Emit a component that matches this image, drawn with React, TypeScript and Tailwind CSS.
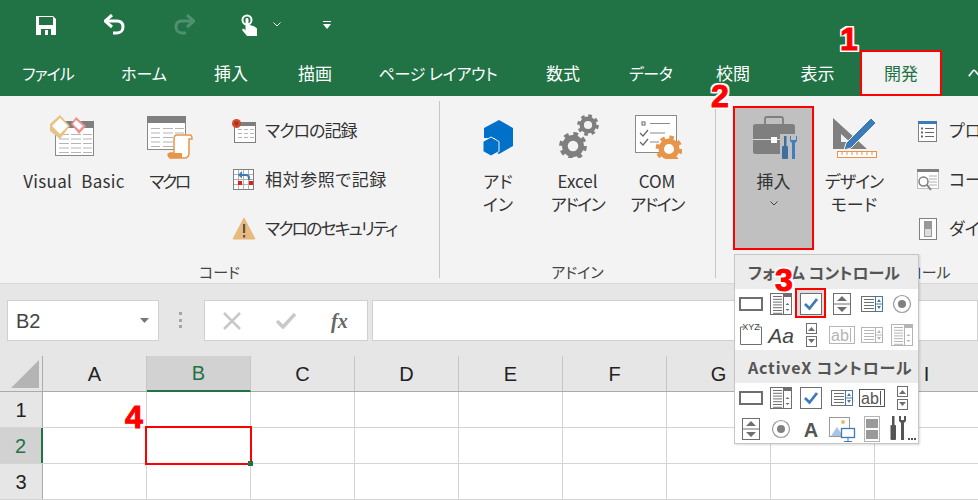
import React from "react";

const jp = "[font-family:'Noto_Sans_CJK_JP','Liberation_Sans',sans-serif] [font-feature-settings:'palt']";

const Gear = ({ cx, cy, r, color, hole = "#f3f3f3" }: { cx: number; cy: number; r: number; color: string; hole?: string }) => {
  const teethR = r * 0.88;
  const dash = (2 * Math.PI * teethR) / 16;
  return (
    <g>
      <circle cx={cx} cy={cy} r={teethR} fill="none" stroke={color} strokeWidth={r * 0.3} strokeDasharray={`${dash} ${dash}`} />
      <circle cx={cx} cy={cy} r={r * 0.6} fill={hole} stroke={color} strokeWidth={r * 0.42} />
    </g>
  );
};

const Lines = ({ x, y, w, n, gap, color = "#b5b5b5" }: { x: number; y: number; w: number; n: number; gap: number; color?: string }) => (
  <g stroke={color} strokeWidth="1">
    {Array.from({ length: n }).map((_, i) => (
      <line key={i} x1={x} x2={x + w} y1={y + i * gap + 0.5} y2={y + i * gap + 0.5} />
    ))}
  </g>
);

// quick access toolbar
const SaveIcon = () => (
  <svg width="20" height="20" viewBox="0 0 20 20">
    <path d="M0 1h17l3 3v16H0z" fill="#fff" />
    <rect x="3" y="2" width="14" height="8" fill="#217346" />
    <rect x="5" y="14" width="10" height="6" fill="#217346" />
    <rect x="9" y="15" width="3" height="5" fill="#fff" />
  </svg>
);
const UndoIcon = ({ dim }: { dim?: boolean }) => (
  <svg width="22" height="21" viewBox="0 0 22 21" className={dim ? "-scale-x-100" : ""}>
    <path d="M3 7h10c4 0 6 2.5 6 6s-2.500 6-6 6H9" fill="none" stroke={dim ? "#4f9070" : "#fff"} strokeWidth="3" />
    <path d="M8 1L1 7l7 6" fill="none" stroke={dim ? "#4f9070" : "#fff"} strokeWidth="3" />
  </svg>
);
const TouchIcon = () => (
  <svg width="17" height="22" viewBox="0 0 17 22">
    <circle cx="6" cy="6" r="4.500" fill="none" stroke="#fff" strokeWidth="2" />
    <path d="M4.500 5.500c0-2 3-2 3 0v5l6 2 2.500 2V22H6l-5-6 1-1.500 2.500 1.500z" fill="#fff" />
  </svg>
);

// ribbon icons
const VbIcon = () => (
  <svg width="48" height="48" viewBox="0 0 48 48">
    <rect x="5.500" y="11.500" width="38" height="34" fill="#fff" stroke="#8a8a8a" />
    <rect x="5" y="11" width="39" height="7" fill="#7f7f7f" />
    <Lines x={9} y={24} w={10} n={5} gap={4.500} />
    <Lines x={21} y={24} w={10} n={5} gap={4.500} />
    <Lines x={33} y={24} w={9} n={5} gap={4.500} />
    <path d="M10 5l10 11-10 13-10-8v-7z" fill="#e8c185" />
    <path d="M10 8l8 8-8 8-8-8z" fill="#fff" />
    <path d="M26 7l10 9-7 8-8-10z" fill="#ef8f8f" />
    <path d="M26 10l7 6-4 4-6-6z" fill="#fff" />
  </svg>
);
const MacroIcon = () => (
  <svg width="48" height="50" viewBox="0 0 48 50">
    <rect x="2.500" y="7.500" width="38" height="33" fill="#fff" stroke="#8a8a8a" />
    <rect x="2" y="7" width="39" height="7" fill="#7f7f7f" />
    <Lines x={6} y={19} w={9} n={5} gap={4.500} />
    <Lines x={18} y={19} w={10} n={5} gap={4.500} />
    <Lines x={30} y={19} w={9} n={3} gap={4.500} />
    <g transform="translate(0 3)">
      <path d="M29 27c0-3 1-4 3-4h13c2 0 2 2 2 4h-3v14c0 3-2 5-5 5H25v-5h4z" fill="#fff" stroke="#e8954a" strokeWidth="1.500" />
      <path d="M23 41h14v5H25c-3 0-3-5-2-5z" fill="#e8954a" />
    </g>
  </svg>
);
const RecordIcon = () => (
  <svg width="24" height="24" viewBox="0 0 24 24">
    <rect x="2.500" y="3.500" width="21" height="20" fill="#fff" stroke="#808080" />
    <rect x="2" y="3" width="22" height="4" fill="#7f7f7f" />
    <Lines x={6} y={10} w={4} n={3} gap={4} />
    <Lines x={12} y={10} w={4} n={3} gap={4} />
    <Lines x={18} y={10} w={4} n={3} gap={4} />
    <circle cx="4.500" cy="4.500" r="4.500" fill="#d64a2c" />
    <circle cx="4.500" cy="4.500" r="2.200" fill="#a83420" />
  </svg>
);
const RelativeIcon = () => (
  <svg width="24" height="24" viewBox="0 0 24 24">
    <rect x="1.500" y="1.500" width="20" height="20" fill="#fff" stroke="#808080" />
    <path d="M6.500 2v19M11.500 2v19M16.500 2v19M2 6.500h19M2 11.500h19M2 16.500h19" stroke="#b0b0b0" />
    <path d="M8 7h6c2 0 3 1 3 3v2" fill="none" stroke="#3d7ab8" strokeWidth="2" />
    <path d="M10 3L6 7l4 3.500z" fill="#3d7ab8" />
    <rect x="6" y="13" width="4" height="4" fill="#e02020" />
    <rect x="17" y="13" width="4" height="4" fill="#e02020" />
  </svg>
);
const WarnIcon = () => (
  <svg width="24" height="24" viewBox="0 0 24 24">
    <path d="M12 1l11 21H1z" fill="#e8b97c" stroke="#e8b97c" />
    <rect x="11" y="7" width="2.200" height="9" fill="#555" />
    <rect x="11" y="18" width="2.200" height="2.500" fill="#555" />
  </svg>
);
const AddinIcon = () => (
  <svg width="34" height="44" viewBox="0 0 34 44">
    <g transform="translate(0 6)">
      <path d="M18 2l14 8v18l-14 8-4-2V20H3v-10z" fill="#0070c9" />
      <path d="M10 19l8 4.500v10L10 38l-8-4.500v-10z" fill="#0070c9" stroke="#f3f3f3" strokeWidth="1" />
    </g>
  </svg>
);
const ExcelAddinIcon = () => (
  <svg width="44" height="48" viewBox="0 0 44 48">
    <Gear cx={17} cy={36} r={13.500} color="#7f7f7f" />
    <Gear cx={32} cy={15} r={10.500} color="#7f7f7f" />
  </svg>
);
const ComIcon = () => (
  <svg width="50" height="50" viewBox="0 0 50 50">
    <rect x="3.500" y="6.500" width="41" height="37" fill="#fff" stroke="#8a8a8a" />
    <rect x="10" y="13" width="3" height="3" fill="none" stroke="#666" />
    <path d="M18 14.500h20M18 24h15M18 33h9" stroke="#8a8a8a" />
    <path d="M8 24l3 3 5-6M8 33l3 3 5-6" fill="none" stroke="#666" strokeWidth="1.200" />
    <Gear cx={37} cy={40} r={13} color="#e8954a" hole="#fff" />
  </svg>
);
const InsertIcon = () => (
  <svg width="50" height="52" viewBox="0 0 50 52">
    <path d="M16 16V11c0-1.200 1-2 2-2h14c1 0 2 .8 2 2v5" fill="none" stroke="#7f7f7f" strokeWidth="1.800" />
    <rect x="4" y="16" width="42" height="30" rx="2.500" fill="#7f7f7f" />
    <rect x="4" y="31" width="42" height="1" fill="#dcdcdc" />
    <rect x="22" y="29" width="6" height="6" fill="#fff" />
    <rect x="31" y="26" width="19" height="26" fill="#c0c0c0" />
    <rect x="35" y="28" width="2.500" height="11" fill="#3f6f9f" />
    <rect x="33" y="38" width="6" height="13" rx="1" fill="#3f6f9f" />
    <path d="M41 28v5l2 2v16h3V35l2-2v-5h-1v4h-5v-4z" fill="#3f7fbf" />
  </svg>
);
const DesignIcon = () => (
  <svg width="48" height="48" viewBox="0 0 48 48">
    <path d="M3 8l34 31H3z M11 24v8h9z" fill="#7f7f7f" fillRule="evenodd" />
    <path d="M41 8L16 33l-2 7 7-2 25-25z" fill="#3d7ab8" stroke="#f3f3f3" />
    <rect x="7.500" y="41.500" width="39" height="6" fill="#fff" stroke="#e8954a" />
    <path d="M12 42v3M17 42v3M22 42v3M27 42v3M32 42v3M37 42v3M42 42v3" stroke="#e8954a" />
  </svg>
);
const PropIcon = () => (
  <svg width="24" height="24" viewBox="0 0 24 24">
    <rect x="2.500" y="2.500" width="18" height="20" fill="#fff" stroke="#808080" />
    <rect x="2" y="2" width="19" height="3" fill="#3d7ab8" />
    <path d="M9 9.500h9M9 13.500h9M9 17.500h9" stroke="#666" />
    <rect x="5" y="8.500" width="2" height="2" fill="#666" />
    <rect x="5" y="12.500" width="2" height="2" fill="#666" />
    <rect x="5" y="16.500" width="2" height="2" fill="#666" />
  </svg>
);
const CodeIcon = () => (
  <svg width="24" height="24" viewBox="0 0 24 24">
    <rect x="1.500" y="2.500" width="21" height="18" fill="#fff" stroke="#c0c0c0" />
    <rect x="1" y="1" width="22" height="3" fill="#7f7f7f" />
    <path d="M13 8h8M13 11h8M13 14h8M13 17h8" stroke="#b0b0b0" />
    <circle cx="7.500" cy="13.500" r="4.500" fill="#fff" stroke="#7f7f7f" strokeWidth="1.500" />
    <path d="M11 17l4 5" stroke="#7f7f7f" strokeWidth="2" />
  </svg>
);
const DialogIcon = () => (
  <svg width="24" height="24" viewBox="0 0 24 24">
    <rect x="3.500" y="1.500" width="17" height="21" fill="#fff" stroke="#808080" />
    <rect x="8.500" y="4.500" width="7" height="15" fill="#ddd" stroke="#999" />
    <rect x="9" y="5" width="6" height="7" fill="#999" />
  </svg>
);

// form control icons, all 28x28
const G = "#6e6e6e";
const ButtonCtl = () => <rect x="3" y="8" width="22" height="12" fill="#fff" stroke={G} strokeWidth="2" />;
const ComboCtl = ({ c = G }: { c?: string }) => (
  <g>
    <rect x="3.500" y="3.500" width="21" height="21" fill="#fff" stroke={c} />
    <rect x="16" y="4" width="8" height="3" fill={c} />
    <path d="M18.500 15l2-2 2 2zM18.500 19l2 2 2-2z" fill={c} />
    <path d="M16.500 7v17" stroke={c} />
    <Lines x={6} y={6} w={9} n={7} gap={2.800} color={c} />
  </g>
);
const CheckCtl = () => (
  <g>
    <rect x="3.500" y="3.500" width="21" height="21" fill="#fff" stroke={G} />
    <path d="M8 14l4.500 4.500L20 9" fill="none" stroke="#3d7ab8" strokeWidth="2.800" />
  </g>
);
const SpinCtl = () => (
  <g>
    <rect x="5.500" y="3.500" width="17" height="21" fill="#fff" stroke={G} />
    <path d="M6 14h16" stroke={G} />
    <path d="M9 11l5-5 5 5zM9 17l5 5 5-5z" fill={G} />
  </g>
);
const NarrowSpin = () => (
  <g>
    <rect x="9.500" y="2.500" width="10" height="10" fill="#fff" stroke={G} />
    <rect x="9.500" y="15.500" width="10" height="10" fill="#fff" stroke={G} />
    <path d="M11 10l3.500-4 3.500 4zM11 18l3.500 4 3.500-4z" fill={G} />
  </g>
);
const ListCtl = ({ c = G, b = "#3d7ab8" }: { c?: string; b?: string }) => (
  <g>
    <rect x="3.500" y="6.500" width="15" height="15" fill="#fff" stroke={c} />
    <Lines x={6} y={9} w={10} n={4} gap={3} color={c} />
    <rect x="17.500" y="6.500" width="7" height="15" fill="#fff" stroke={b} />
    <path d="M17.500 14h7" stroke={b} />
    <path d="M19 12l2-3 2 3zM19 16l2 3 2-3z" fill={c} />
  </g>
);
const RadioCtl = () => (
  <g>
    <circle cx="14" cy="14" r="8.500" fill="#fff" stroke="#999" strokeWidth="1.200" />
    <circle cx="14" cy="14" r="4" fill="#808080" />
  </g>
);
const LabelCtl = () => (
  <g>
    <path d="M7 6H3.500v17.500h21V6H21" fill="none" stroke={G} />
    <text x="14" y="9" fontSize="9" textAnchor="middle" fill="#444" fontFamily="'Liberation Sans'">XYZ</text>
  </g>
);
const AaCtl = () => (
  <text x="14" y="22" fontSize="21" textAnchor="middle" fontStyle="italic" fill="#444" fontFamily="'Liberation Sans'">Aa</text>
);
const TextCtl = ({ c }: { c: string }) => (
  <g>
    <rect x="1.500" y="5.500" width="25" height="17" fill="#fff" stroke={c} />
    <text x="12" y="20" fontSize="16" textAnchor="middle" fill={c} fontFamily="'Liberation Sans'">ab</text>
    <path d="M22.500 7v14" stroke={c} />
  </g>
);
const BoldA = () => (
  <text x="14" y="22" fontSize="20" textAnchor="middle" fontWeight="700" fill="#555" fontFamily="'Liberation Sans'">A</text>
);
const PictureCtl = () => (
  <g>
    <rect x="1.500" y="2.500" width="20" height="19" fill="#fff" stroke="#999" />
    <circle cx="15" cy="7" r="2" fill="#e8b97c" />
    <path d="M3 21l6-9 6 9z" fill="#a9c6de" />
    <rect x="13.500" y="13.500" width="13" height="9" fill="#fff" stroke="#3d7ab8" strokeWidth="1.300" />
    <path d="M20 23v3M16 26.500h8" stroke="#3d7ab8" />
  </g>
);
const ToggleCtl = () => (
  <g>
    <rect x="6.500" y="1.500" width="15" height="25" fill="#fff" stroke="#b5b5b5" />
    <rect x="8" y="4" width="12" height="9" fill="#999" />
    <rect x="8" y="15" width="12" height="9" fill="#999" />
  </g>
);
const ToolsCtl = () => (
  <g fill="#555">
    <rect x="4" y="1" width="2.500" height="10" />
    <rect x="2.500" y="10" width="5.500" height="15" rx="1" />
    <path d="M11 1v5l2 2v17h3V8l2-2V1l-2 0v4h-3V1z" />
    <rect x="20" y="23" width="2" height="2" />
    <rect x="23" y="23" width="2" height="2" />
    <rect x="26" y="23" width="2" height="2" />
  </g>
);

const Cell = ({ children, selected }: { children: React.ReactNode; selected?: boolean }) => (
  <div className="relative flex items-center justify-center">
    {selected && <div className="absolute left-[-1px] top-[-1px] w-[31px] h-[30px] bg-[#dedede] border-2 border-[#f00]" />}
    <svg width="28" height="28" viewBox="0 0 28 28" className="relative">
      {children}
    </svg>
  </div>
);

const LargeButton = ({ icon, lines, w, extra }: { icon: React.ReactNode; lines: React.ReactNode[]; w: string; extra?: string }) => (
  <div className={`flex flex-col items-center pt-[13px] text-[17px] leading-[23px] text-[#333] shrink-0 ${w} ${extra || ""}`}>
    <div className="h-[50px] flex items-center justify-center">{icon}</div>
    <div className="mt-[10px] flex flex-col items-center">
      {lines.map((l, i) => (
        <span key={i} className="whitespace-nowrap">{l}</span>
      ))}
    </div>
  </div>
);

const SmallItem = ({ icon, label, cls }: { icon: React.ReactNode; label: string; cls?: string }) => (
  <div className="h-[49px] flex items-center gap-[9px] text-[17px] text-[#333] whitespace-nowrap">
    {icon}
    <span className={`-mt-[2px] ${cls || ""}`}>{label}</span>
  </div>
);

const Narrow = ({ children, cls = "tracking-[-1.500px]" }: { children: React.ReactNode; cls?: string }) => <span className={cls}>{children}</span>;

const Divider = () => <div className="w-px shrink-0 my-[5px] bg-[#c6c6c6]" />;

const tabs = [
  ["ファイル", "w-[96px] text-[16px] tracking-[-1px]"],
  ["ホーム", "w-[96px] text-[16px]"],
  ["挿入", "w-[78px] text-[17px]"],
  ["描画", "w-[90px] text-[17px]"],
  ["ページ レイアウト", "w-[156px] text-[16px] tracking-[-0.2px]"],
  ["数式", "w-[94px] text-[17px]"],
  ["データ", "w-[81px] text-[16px] tracking-[-0.5px]"],
  ["校閲", "w-[84px] text-[17px]"],
  ["表示", "w-[85px] text-[17px]"],
];

const Num = ({ n, cls }: { n: string; cls: string }) => (
  <div
    className={`absolute font-['Liberation_Sans',sans-serif] font-bold text-[32px] leading-none text-[#f00] [-webkit-text-stroke:1px_#f00] [text-shadow:2px_0_0_#fff,-2px_0_0_#fff,0_2px_0_#fff,0_-2px_0_#fff,2px_2px_0_#fff,-2px_-2px_0_#fff,2px_-2px_0_#fff,-2px_2px_0_#fff] ${cls}`}
  >
    {n}
  </div>
);

const columns = ["A", "B", "C", "D", "E", "F", "G", "H", "I"];

export default function App() {
  return (
    <div className={`relative w-[978px] h-[500px] overflow-hidden bg-white ${jp}`}>
      {/* title bar + tabs */}
      <div className="h-[96px] bg-[#217346] text-white">
        <div className="h-[50px] flex items-center pb-[1px]">
          <div className="ml-[36px]"><SaveIcon /></div>
          <div className="ml-[48px]"><UndoIcon /></div>
          <div className="ml-[47px]"><UndoIcon dim /></div>
          <div className="ml-[46px]"><TouchIcon /></div>
          <svg width="8" height="5" viewBox="0 0 8 5" className="ml-[15px]">
            <path d="M.5.500L4 4 7.500.500" fill="none" stroke="#fff" />
          </svg>
          <svg width="8" height="8" viewBox="0 0 8 8" className="ml-[42px]">
            <path d="M0 0h8v1H0zM0 3h8L4 8z" fill="#fff" />
          </svg>
        </div>
        <div className="h-[46px] flex">
          {tabs.map(([t, w]) => (
            <div key={t} className={`${w} shrink-0 flex items-center justify-center whitespace-nowrap`}>{t}</div>
          ))}
          <div className="w-[82px] shrink-0 border-2 border-[#f00] bg-[#f3f3f3] text-[#217346] text-[17px] flex items-center justify-center">開発</div>
          <div className="pl-[25px] shrink-0 flex items-center text-[16px] whitespace-nowrap">ヘルプ</div>
        </div>
      </div>

      {/* ribbon */}
      <div className="h-[188px] flex bg-[#f3f3f3] border-b border-[#d8d8d8]">
        <div className="w-[439px] flex flex-col shrink-0">
          <div className="flex-1 flex pl-[22px]">
            <LargeButton w="w-[104px]" icon={<VbIcon />} lines={[<span className="tracking-[0.3px] [word-spacing:5px]">Visual Basic</span>]} />
            <LargeButton w="w-[78px] ml-[4px]" icon={<MacroIcon />} lines={[<Narrow cls="tracking-[-2.500px]">マクロ</Narrow>]} />
            <div className="ml-[24px] pt-[10px] flex flex-col">
              <SmallItem icon={<RecordIcon />} label="マクロの記録" cls="tracking-[-1px]" />
              <SmallItem icon={<RelativeIcon />} label="相対参照で記録" cls="tracking-[0.6px]" />
              <SmallItem icon={<WarnIcon />} label="マクロのセキュリティ" cls="tracking-[-2px]" />
            </div>
          </div>
          <div className="h-[24px] mb-[1px] leading-[28px] text-center text-[15px] text-[#444]">コード</div>
        </div>
        <Divider />
        <div className="w-[275px] flex flex-col shrink-0">
          <div className="flex-1 flex pl-[18px]">
            <LargeButton w="w-[80px]" icon={<AddinIcon />} lines={["アド", "イン"]} />
            <LargeButton w="w-[79px]" icon={<ExcelAddinIcon />} lines={["Excel", <Narrow>アドイン</Narrow>]} />
            <LargeButton w="w-[80px]" icon={<ComIcon />} lines={["COM", <Narrow>アドイン</Narrow>]} />
          </div>
          <div className="h-[24px] mb-[1px] leading-[28px] text-center text-[15px] text-[#444]">アドイン</div>
        </div>
        <Divider />
        <div className="flex-1 relative flex flex-col">
          <div className="flex-1 flex pl-[17px] pt-[10px] whitespace-nowrap">
            <div className="w-[81px] shrink-0 h-[144px] border-2 border-[#f00] bg-[#c0c0c0] flex flex-col items-center">
              <LargeButton w="w-[77px]" extra="!pt-[1px]" icon={<InsertIcon />} lines={["挿入"]} />
              <svg width="8" height="5" viewBox="0 0 8 5" className="mt-[9px]">
                <path d="M.5.500L4 4 7.500.500" fill="none" stroke="#444" />
              </svg>
            </div>
            <LargeButton w="w-[80px]" extra="-mt-[10px]" icon={<DesignIcon />} lines={[<Narrow cls="tracking-[-1px]">デザイン</Narrow>, "モード"]} />
            <div className="ml-[22px] flex flex-col shrink-0">
              <SmallItem icon={<PropIcon />} label="プロパティ" />
              <SmallItem icon={<CodeIcon />} label="コードの表示" />
              <SmallItem icon={<DialogIcon />} label="ダイアログの実行" />
            </div>
          </div>
          <div className="h-[24px] mb-[1px] leading-[28px] pl-[152px] text-[15px] text-[#444] whitespace-nowrap">コントロール</div>
        </div>
      </div>

      {/* formula bar */}
      <div className="h-[72px] bg-[#e6e6e6] flex items-start pt-[16px]">
        <div className="ml-[7px] w-[152px] h-[41px] bg-white border border-[#d0d0d0] flex items-center justify-between pl-[8px] pr-[9px] text-[20px] text-[#444] font-['Liberation_Sans',sans-serif]">
          B2
          <svg width="9" height="5" viewBox="0 0 9 5"><path d="M0 0h9L4.500 5z" fill="#777" /></svg>
        </div>
        <div className="ml-[20px] w-[3px] h-[16px] mt-[12px] flex flex-col justify-between">
          <div className="h-[3px] bg-[#a6a6a6]" />
          <div className="h-[3px] bg-[#a6a6a6]" />
          <div className="h-[3px] bg-[#a6a6a6]" />
        </div>
        <div className="ml-[22px] w-[164px] h-[41px] bg-white border border-[#d0d0d0] flex items-center">
          <svg width="18" height="18" viewBox="0 0 18 18" className="ml-[18px]">
            <path d="M1 1l16 16M17 1L1 17" stroke="#c8c8c8" strokeWidth="2.500" />
          </svg>
          <svg width="20" height="16" viewBox="0 0 20 16" className="ml-[35px]">
            <path d="M1 8l6 6L19 1" fill="none" stroke="#c8c8c8" strokeWidth="3.500" />
          </svg>
          <span className="ml-[35px] font-['Liberation_Serif',serif] italic font-bold text-[20px] text-[#666]">fx</span>
        </div>
        <div className="ml-[4px] flex-1 h-[41px] bg-white border border-[#d0d0d0]" />
      </div>

      {/* sheet */}
      <div className="font-['Liberation_Sans',sans-serif] text-[20px] text-[#222]">
        <div className="flex h-[36px] bg-[#e6e6e6] border-b border-[#ababab]">
          <div className="w-[43px] shrink-0 border-r border-[#ababab] relative">
            <svg width="30" height="30" viewBox="0 0 30 30" className="absolute left-[10px] top-[3px]">
              <path d="M29 1v28H1z" fill="#b4b4b4" />
            </svg>
          </div>
          {columns.map((c) => (
            <div
              key={c}
              className={`w-[104px] shrink-0 flex items-center justify-center border-r border-[#c6c6c6] ${c === "B" ? "bg-[#d2d2d2] text-[#217346] border-b-2 -mb-px border-b-[#217346]" : ""}`}
            >
              {c}
            </div>
          ))}
        </div>
        {[1, 2, 3].map((r) => (
          <div key={r} className="flex h-[36px] border-b border-[#d4d4d4]">
            <div className={`w-[43px] shrink-0 flex items-center justify-center border-r border-[#ababab] ${r === 2 ? "bg-[#d2d2d2] text-[#217346] border-r-2 border-r-[#217346]" : "bg-[#e6e6e6]"}`}>
              {r}
            </div>
            {columns.map((c) => (
              <div key={c} className="w-[104px] shrink-0 border-r border-[#d4d4d4]" />
            ))}
          </div>
        ))}
      </div>

      {/* selected cell marker */}
      <div className="absolute left-[145px] top-[426px] w-[107px] h-[39px] border-2 border-[#f00]" />
      <div className="absolute left-[248px] top-[461px] w-[5px] h-[5px] bg-[#217346]" />

      {/* insert dropdown */}
      <div className="absolute left-[734px] top-[254px] w-[185px] h-[190px] bg-white border border-[#c6c6c6] shadow-[1px_1px_2px_rgba(0,0,0,0.15)]">
        <div className="h-[34px] bg-[#ececec] flex items-center pl-[13px] text-[16px] font-bold text-[#555] whitespace-nowrap">フォーム コントロール</div>
        <div className="grid grid-cols-6 auto-rows-[30.5px] pl-[1px] pr-[1px]">
          <Cell><ButtonCtl /></Cell>
          <Cell><ComboCtl /></Cell>
          <Cell selected><CheckCtl /></Cell>
          <Cell><SpinCtl /></Cell>
          <Cell><ListCtl /></Cell>
          <Cell><RadioCtl /></Cell>
          <Cell><LabelCtl /></Cell>
          <Cell><AaCtl /></Cell>
          <Cell><NarrowSpin /></Cell>
          <Cell><TextCtl c="#b5b5b5" /></Cell>
          <Cell><ListCtl c="#b5b5b5" b="#b5b5b5" /></Cell>
          <Cell><ComboCtl c="#b5b5b5" /></Cell>
        </div>
        <div className="h-[33px] bg-[#ececec] flex items-center pl-[13px] text-[16px] tracking-[0.8px] font-bold text-[#555] whitespace-nowrap">ActiveX コントロール</div>
        <div className="grid grid-cols-6 auto-rows-[30.5px] pl-[1px] pr-[1px]">
          <Cell><ButtonCtl /></Cell>
          <Cell><ComboCtl /></Cell>
          <Cell><CheckCtl /></Cell>
          <Cell><ListCtl /></Cell>
          <Cell><TextCtl c="#555" /></Cell>
          <Cell><NarrowSpin /></Cell>
          <Cell><SpinCtl /></Cell>
          <Cell><RadioCtl /></Cell>
          <Cell><BoldA /></Cell>
          <Cell><PictureCtl /></Cell>
          <Cell><ToggleCtl /></Cell>
          <Cell><ToolsCtl /></Cell>
        </div>
      </div>

      {/* step numbers */}
      <Num n="1" cls="left-[840px] top-[23px]" />
      <Num n="2" cls="left-[711px] top-[80px]" />
      <Num n="3" cls="left-[775px] top-[264px]" />
      <Num n="4" cls="left-[125px] top-[401px]" />
    </div>
  );
}
